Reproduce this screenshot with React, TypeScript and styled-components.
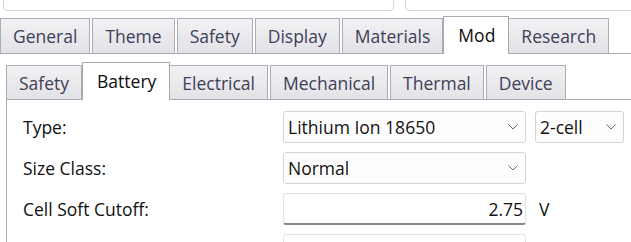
import React from 'react'
import styled, { createGlobalStyle, css } from 'styled-components'

const GlobalStyle = createGlobalStyle`
  html, body {
    margin: 0;
    padding: 0;
    background: #ffffff;
    font-family: 'Open Sans', 'Noto Sans', sans-serif;
    overflow: hidden;
  }
`

const Window = styled.div`
  width: 631px;
  height: 242px;
  overflow: hidden;
  background: #ffffff;
`

const TopRow = styled.div`
  display: flex;
  gap: 11px;
  padding-left: 3px;
  margin-top: -21px;
  height: 32px;
`

const TopBox = styled.div<{ $w: number }>`
  width: ${({ $w }) => $w}px;
  flex-shrink: 0;
  height: 32px;
  box-sizing: border-box;
  border: 1px solid #d6d6d6;
  border-radius: 4px;
  background: #ffffff;
`

const MainTabStrip = styled.div`
  display: flex;
  align-items: flex-end;
  margin-top: 7px;
  height: 36px;
  border-bottom: 1px solid #a9a9b0;
  box-sizing: border-box;
`

const SubTabStrip = styled(MainTabStrip)`
  margin-top: 11px;
  margin-left: 6px;
  height: 35px;
`

const Tab = styled.div<{ $active?: boolean; $h: number; $lift: number }>(
  ({ $active, $h, $lift }) => css`
    box-sizing: border-box;
    height: ${$h}px;
    padding: 0 12px;
    margin-right: 2px;
    display: flex;
    align-items: center;
    font-size: 17.5px;
    color: #3e3e58;
    border: 1px solid #acacb4;
    border-bottom: none;
    background: linear-gradient(#f2f2f4, #e2e2e7);
    white-space: nowrap;

    ${$active &&
    css`
      height: ${$h + $lift + 1}px;
      margin: 0 -1px -1px -2px;
      padding: 0 13px ${$lift - 1}px 14px;
      background: #ffffff;
      color: #0c0c0c;
      position: relative;
      z-index: 1;
      border-color: #a9a9b0;
    `}
  `
)

const Panel = styled.div`
  margin-left: 6px;
  border-left: 1px solid #a9a9b0;
  padding: 11px 0 0 16px;
  height: 160px;
  background: #ffffff;
`

const Form = styled.div`
  display: grid;
  grid-template-columns: 251px 243px 89px;
  grid-auto-rows: 32px;
  column-gap: 9px;
  row-gap: 9px;
  align-items: center;
`

const Label = styled.div`
  font-size: 17.5px;
  color: #111111;
  grid-column: 1;
`

const Select = styled.div`
  height: 32px;
  box-sizing: border-box;
  border: 1px solid #d4d4d4;
  border-radius: 3px;
  background: #fdfdfd;
  display: flex;
  align-items: center;
  justify-content: space-between;
  padding: 0 7px 0 4px;
  font-size: 17.5px;
  color: #111111;
`

const TextBox = styled.div`
  height: 32px;
  box-sizing: border-box;
  border: 1px solid #e2e2e2;
  border-bottom: 2px solid #868686;
  border-radius: 3px;
  background: #ffffff;
  display: flex;
  align-items: center;
  justify-content: flex-end;
  padding: 1px 2px 0 4px;
  font-size: 17.5px;
  color: #111111;
`

const Unit = styled.div`
  font-size: 17.5px;
  color: #111111;
  padding-left: 4px;
`

const Chevron = () => (
  <svg width="10" height="6" viewBox="0 0 10 6">
    <path d="M0.5 0.5 L5 5 L9.5 0.5" fill="none" stroke="#6a6a6a" strokeWidth="1" />
  </svg>
)

const mainTabs = ['General', 'Theme', 'Safety', 'Display', 'Materials', 'Mod', 'Research']
const subTabs = ['Safety', 'Battery', 'Electrical', 'Mechanical', 'Thermal', 'Device']

export default function App() {
  return (
    <Window>
      <GlobalStyle />
      <TopRow>
        <TopBox $w={391} />
        <TopBox $w={240} />
      </TopRow>

      <MainTabStrip>
        {mainTabs.map((t) => (
          <Tab key={t} $h={35} $lift={2} $active={t === 'Mod'}>
            {t}
          </Tab>
        ))}
      </MainTabStrip>

      <SubTabStrip>
        {subTabs.map((t) => (
          <Tab key={t} $h={34} $lift={3} $active={t === 'Battery'}>
            {t}
          </Tab>
        ))}
      </SubTabStrip>

      <Panel>
        <Form>
          <Label>Type:</Label>
          <Select>
            Lithium Ion 18650
            <Chevron />
          </Select>
          <Select>
            2-cell
            <Chevron />
          </Select>

          <Label>Size Class:</Label>
          <Select>
            Normal
            <Chevron />
          </Select>
          <div />

          <Label>Cell Soft Cutoff:</Label>
          <TextBox>2.75</TextBox>
          <Unit>V</Unit>

          <Label />
          <TextBox />
          <div />
        </Form>
      </Panel>
    </Window>
  )
}
